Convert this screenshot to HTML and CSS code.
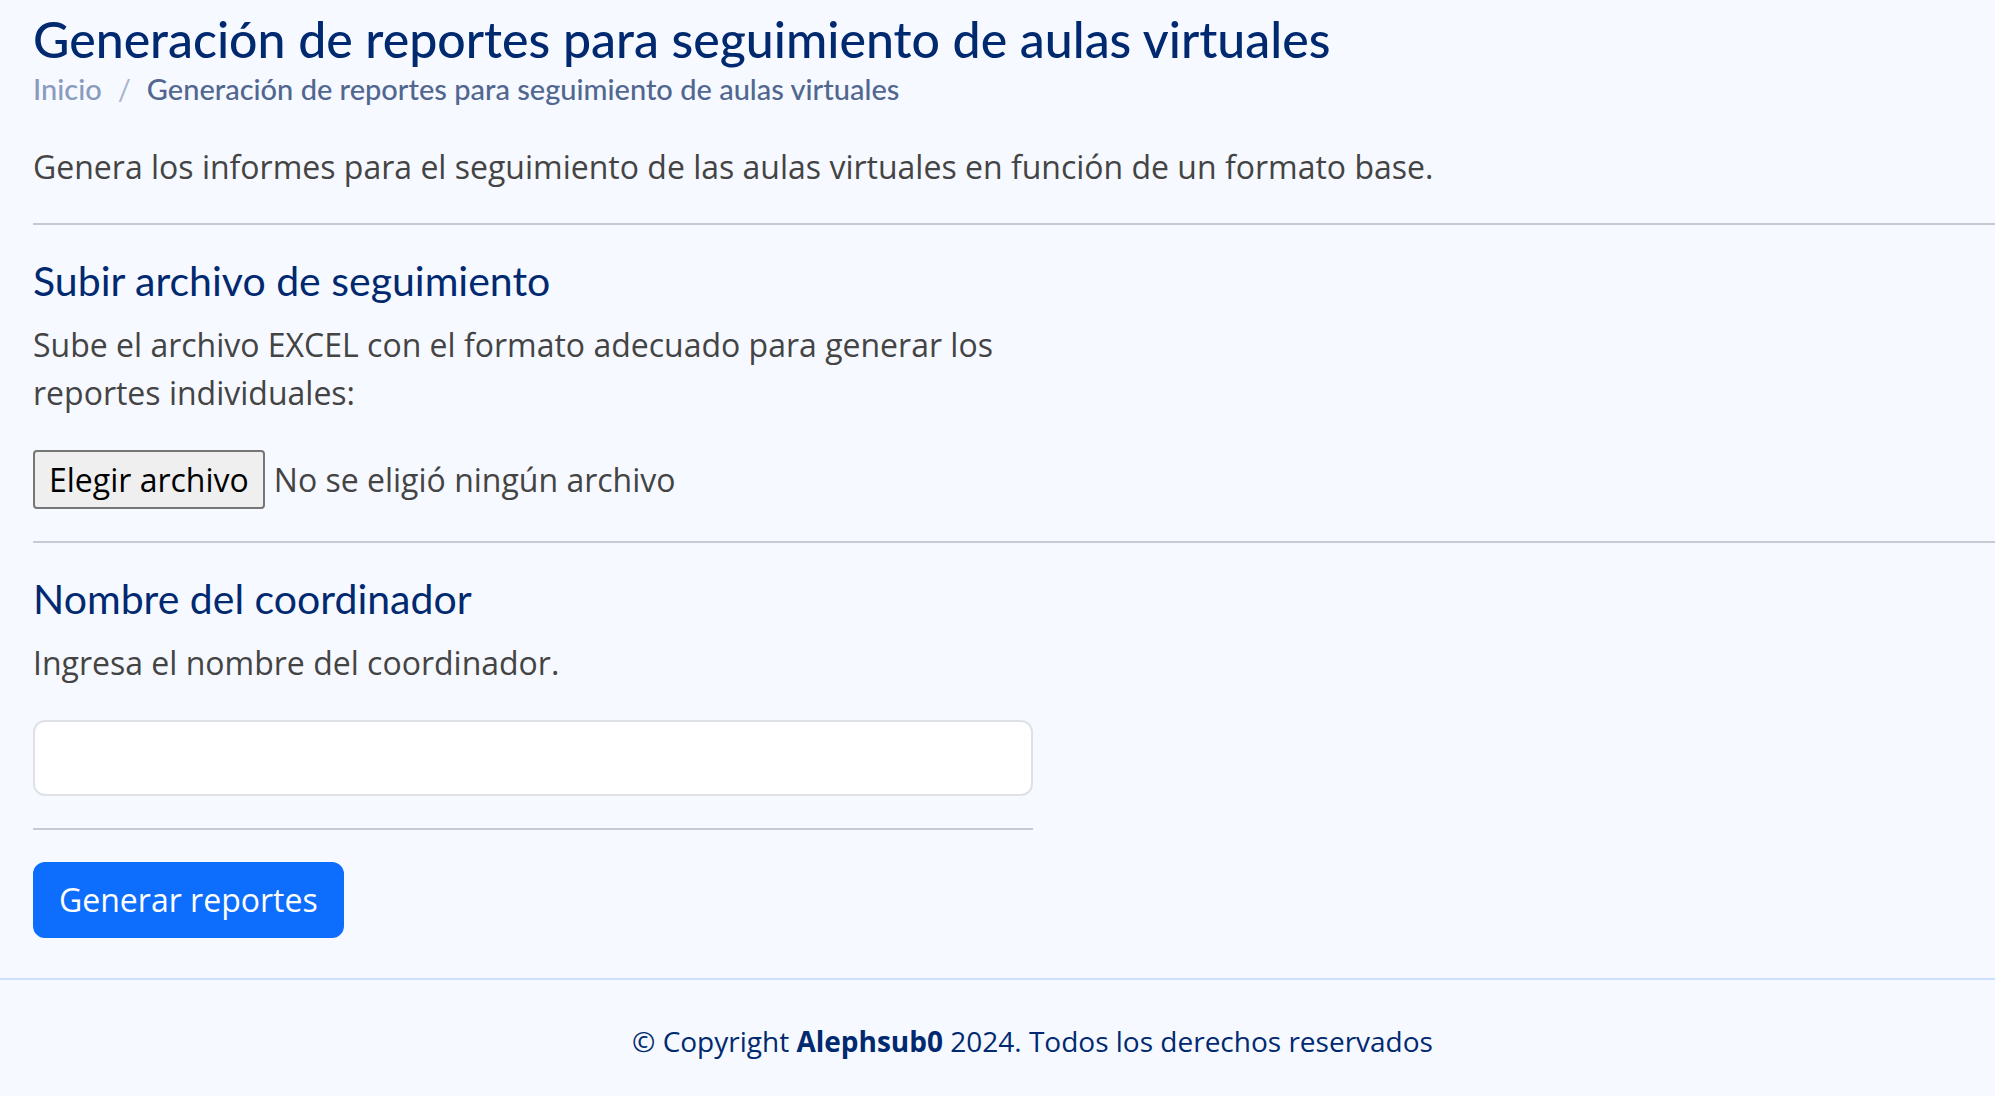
FILE: index.html
```html
<!DOCTYPE html>
<html lang="es">
<head>
<meta charset="utf-8">
<title>Generación de reportes</title>
<link rel="stylesheet" href="styles.css">
</head>
<body>
<div class="page">
  <main class="main">
    <div class="pagetitle">
      <h1>Generación de reportes para seguimiento de aulas virtuales</h1>
      <nav class="breadcrumb">
        <a href="#">Inicio</a>
        <span class="sep">/</span>
        <span class="active">Generación de reportes para seguimiento de aulas virtuales</span>
      </nav>
    </div>
    <p class="lead">Genera los informes para el seguimiento de las aulas virtuales en función de un formato base.</p>
    <hr class="rule">
    <section class="col">
      <h5 class="sec-title">Subir archivo de seguimiento</h5>
      <p class="text">Sube el archivo EXCEL con el formato adecuado para generar los reportes individuales:</p>
      <label class="file">
        <span class="file-btn">Elegir archivo</span>
        <span class="file-name">No se eligió ningún archivo</span>
      </label>
    </section>
    <hr class="rule">
    <section class="col">
      <h5 class="sec-title">Nombre del coordinador</h5>
      <p class="text">Ingresa el nombre del coordinador.</p>
      <input class="field" type="text">
      <hr class="rule">
      <button class="btn-primary" type="button">Generar reportes</button>
    </section>
  </main>
  <footer class="footer">
    <div class="copyright">© Copyright <strong>Alephsub0</strong> 2024. Todos los derechos reservados</div>
  </footer>
</div>
</body>
</html>
```

FILE: styles.css
```css
html, body {
  margin: 0;
  padding: 0;
  background: #f6f9ff;
  overflow: hidden;
}
body {
  font-family: "Open Sans", "Liberation Sans", sans-serif;
  color: #444444;
  font-size: 32px;
  line-height: 1.5;
}
.page {
  width: 2065px;
}
.main {
  padding: 10px 33px 40px 33px;
}
.pagetitle h1 {
  margin: 0;
  font-family: "Lato", "Noto Sans", sans-serif;
  font-weight: 500;
  font-size: 50px;
  line-height: 58px;
  color: #012970;
}
.breadcrumb {
  display: flex;
  font-family: "Lato", "Noto Sans", sans-serif;
  font-size: 29px;
  font-weight: 500;
  line-height: 42px;
  color: #899bbd;
}
.breadcrumb a {
  color: #899bbd;
  text-decoration: none;
}
.breadcrumb .sep {
  padding: 0 16px;
  color: #a9b5cc;
  font-weight: 400;
}
.breadcrumb .active {
  color: #51678f;
}
.lead {
  margin: 33px 0 32px;
}
.rule {
  margin: 32px 0;
  border: 0;
  border-top: 2px solid #c7cbd1;
}
.col {
  width: 1000px;
}
.sec-title {
  margin: 0 0 16px;
  font-family: "Lato", "Noto Sans", sans-serif;
  font-weight: 400;
  font-size: 41px;
  line-height: 48px;
  color: #012970;
}
.text {
  margin: 0 0 33px;
}
.file {
  display: flex;
  align-items: center;
  gap: 9px;
}
.file-btn {
  box-sizing: border-box;
  height: 59px;
  padding: 0 14px;
  display: flex;
  align-items: center;
  background: #efefef;
  border: 2px solid #767676;
  border-radius: 4px;
  color: #000;
}
.field {
  display: block;
  box-sizing: border-box;
  width: 1000px;
  height: 76px;
  margin: 0;
  background: #fff;
  border: 2px solid #dee2e6;
  border-radius: 12px;
}
.btn-primary {
  display: block;
  box-sizing: border-box;
  height: 76px;
  padding: 12px 24px;
  border: 2px solid #0d6efd;
  border-radius: 12px;
  background: #0d6efd;
  color: #fff;
  font-family: "Open Sans", "Liberation Sans", sans-serif;
  font-size: 32px;
  line-height: 48px;
}
.footer {
  border-top: 2px solid #cddfff;
  padding: 40px 0;
}
.copyright {
  text-align: center;
  font-size: 28px;
  line-height: 1.5;
  color: #012970;
}
.copyright strong {
  font-weight: 700;
}
```
